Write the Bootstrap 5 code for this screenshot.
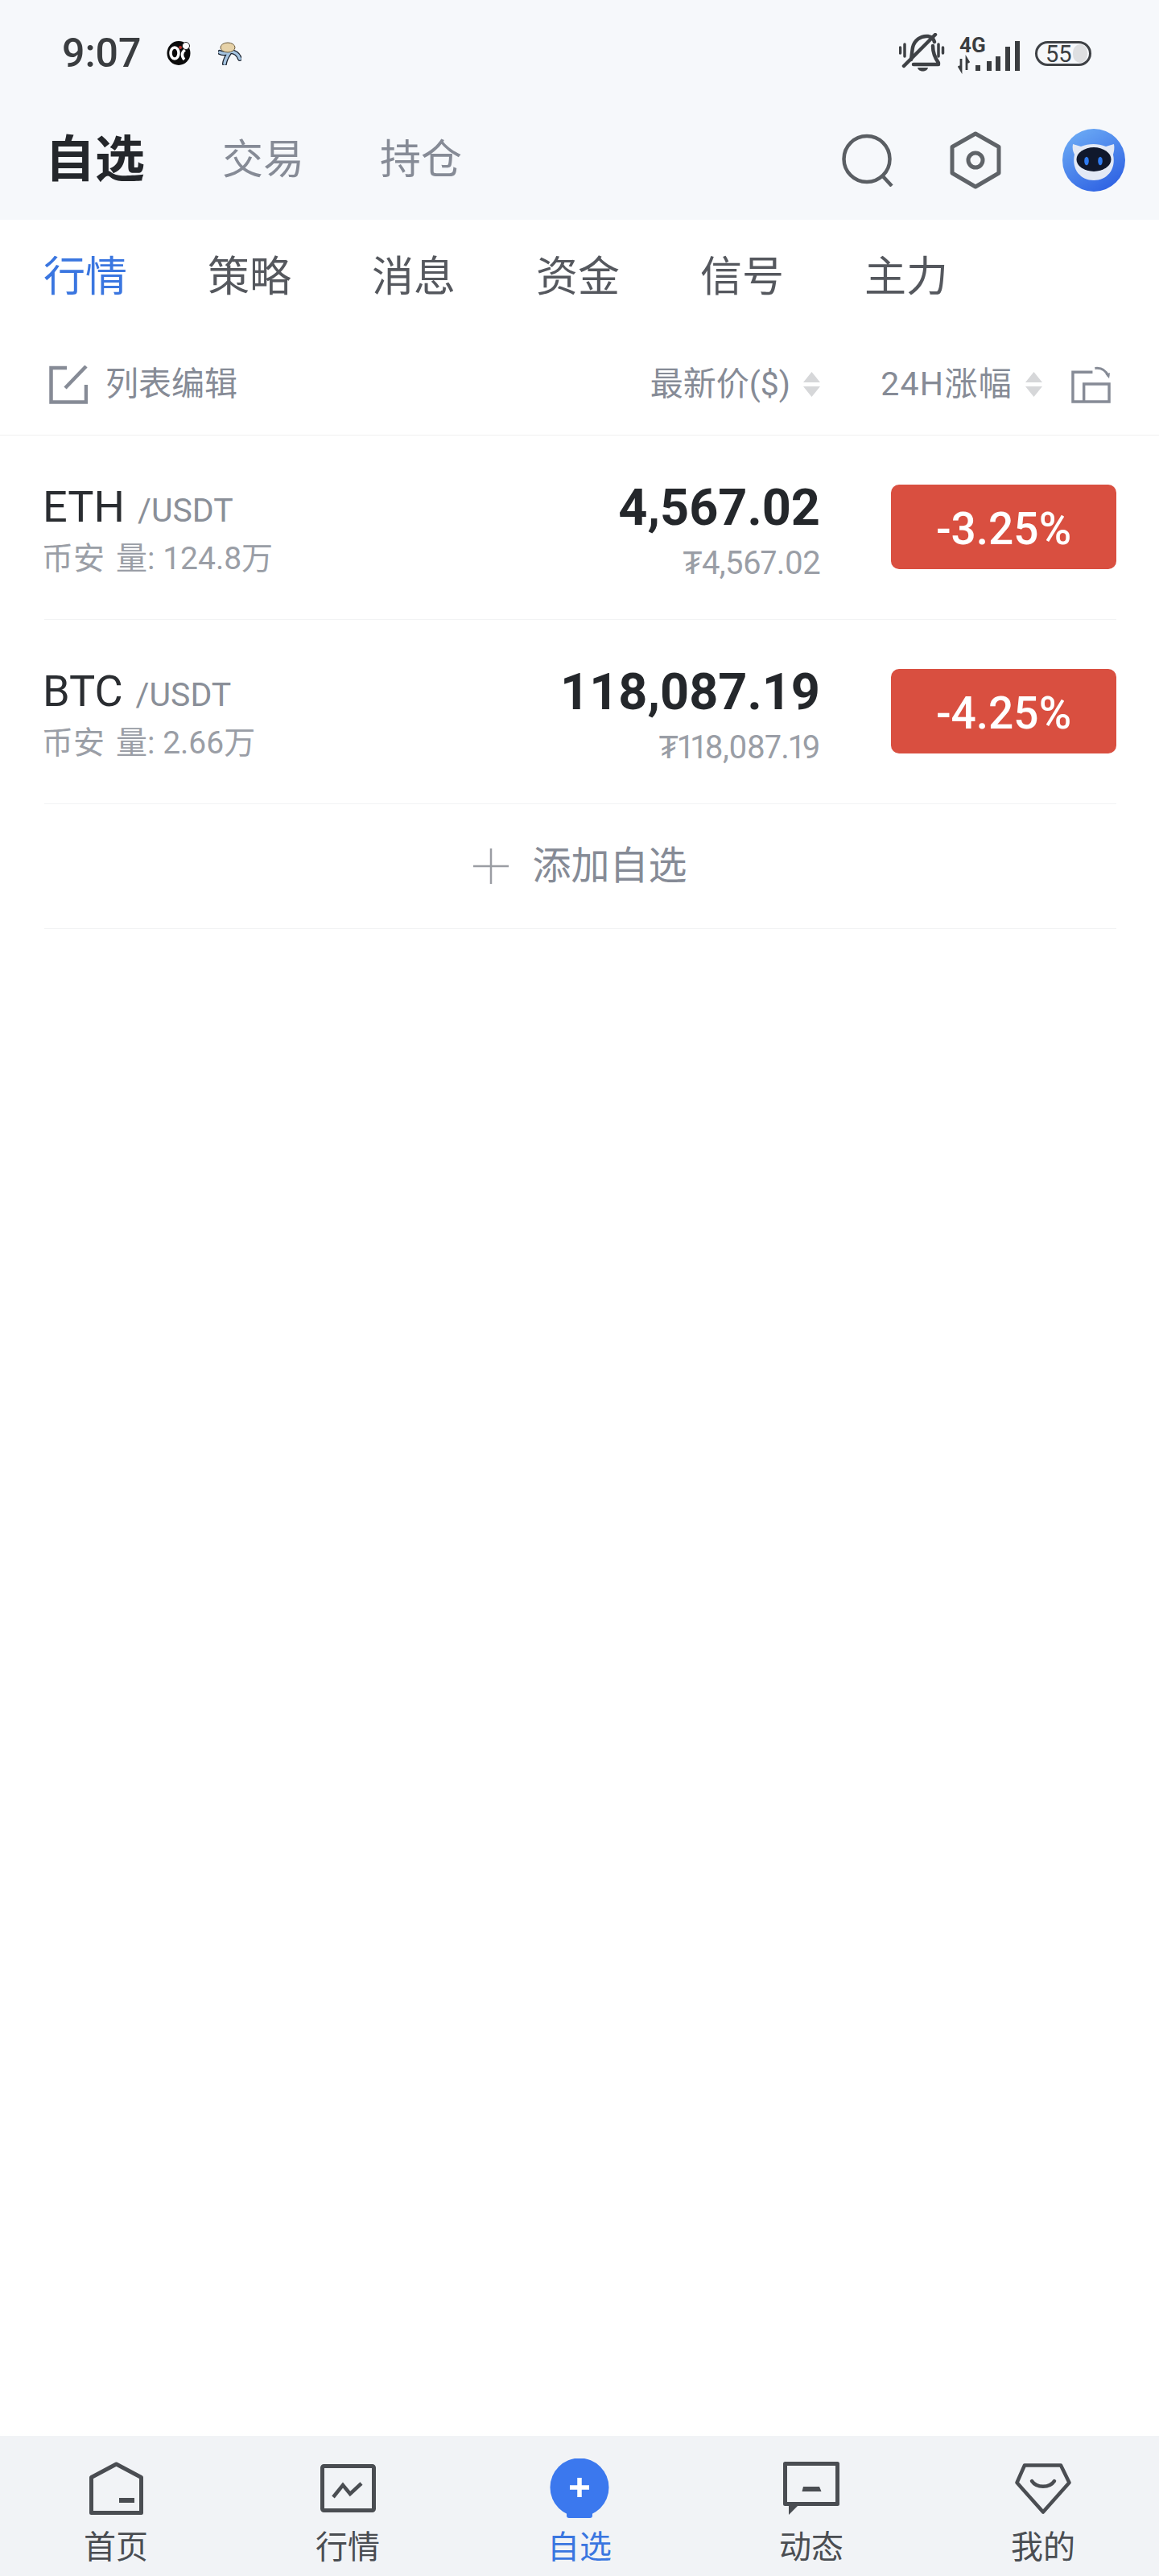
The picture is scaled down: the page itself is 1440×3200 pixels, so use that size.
<!DOCTYPE html>
<html lang="zh-CN">
<head>
    <meta charset="UTF-8">
    <meta name="viewport" content="width=device-width, initial-scale=1.0">
    <title>自选</title>
    <link href="https://cdn.jsdelivr.net/npm/bootstrap@5.3.0/dist/css/bootstrap.min.css" rel="stylesheet">
    <style>
        body { font-family: Roboto, "Noto Sans CJK SC", sans-serif; background: #fff; color: #2a2d31; }
        svg { display: block; flex: none; }
        .top-head { background: #f6f8fb; height: 273px; }
        .status-row { height: 132px; padding: 0 84px 0 77px; }
        .status-time { font-size: 50px; font-weight: 500; line-height: 1; color: #3a3d40; width: 130px; }
        .status-gap { margin-left: 34px; }
        .head-row { height: 141px; padding: 0 42px 8px 56px; }
        .head-main { font-size: 62px; font-weight: 700; color: #24272b; line-height: 1; width: 220px; }
        .head-tab { font-size: 51px; color: #868b96; line-height: 1; width: 196px; }
        .head-hex { margin: 0 76px 0 70px; }
        .sub-tabs { height: 140px; padding: 4px 0 0 54px; gap: 100px; font-size: 52px; color: #55585e; line-height: 1; }
        .sub-active { color: #3a76e0; }
        .list-head { height: 128px; border-bottom: 1px solid #f0f0f0; padding: 2px 60px 0 61px; font-size: 41px; color: #868b96; line-height: 1; }
        .list-edit { margin-left: 22px; }
        .sort-arrows { width: 21px; margin-left: 16px; }
        .col-change { margin-left: 75px; letter-spacing: 1.300px; }
        .col-rotate { margin-left: 36px; }
        .coin-row { height: 229px; margin: 0 53px 0 55px; padding-top: 61px; border-bottom: 1px solid #f2f3f4; }
        .coin-name { font-size: 54px; line-height: 56px; color: #2a2d31; margin-left: -2px; }
        .coin-pair { font-size: 41px; color: #8a8f98; margin-left: 16px; }
        .coin-vol { font-size: 39px; line-height: 50px; color: #9a9ea6; margin: 7px 0 0 -3px; }
        .vol-gap { margin-left: 14px; }
        .price-col { width: 500px; text-align: right; margin-right: 88px; }
        .price-main { font-size: 63px; font-weight: 700; line-height: 58px; color: #24272b; }
        .price-sub { font-size: 40px; line-height: 50px; color: #9a9ea6; margin-top: 15px; font-variant-numeric: proportional-nums; letter-spacing: -0.700px; }
        .change-box { width: 280px; height: 105px; padding-top: 5px; background: #d94f40; border-radius: 10px; color: #fff; font-size: 55px; font-weight: 500; }
        .add-row { height: 155px; margin: 0 53px 0 55px; border-bottom: 1px solid #f2f3f4; font-size: 48px; color: #868b96; gap: 29px; }
        .bottom-bar { background: #f1f3f6; height: 174px; padding-top: 23px; }
        .bar-item { width: 288px; color: #4a4d52; font-size: 40px; line-height: 1; }
        .bar-icon { height: 84px; }
        .bar-label { line-height: 52px; margin-top: 6px; }
        .bar-on { color: #3a76e0; }
    </style>
</head>
<body>
<div class="d-flex flex-column min-vh-100">
    <div class="top-head">
        <div class="status-row d-flex align-items-center">
            <span class="status-time">9:07</span>
            <svg width="30" height="30" viewBox="0 0 30 30">
                <ellipse cx="15" cy="15" rx="14.500" ry="15" fill="#0b0b0b"/>
                <ellipse cx="10" cy="15" rx="5" ry="7" fill="none" stroke="#fff" stroke-width="3.500"/>
                <path d="M23 11c-4 2-5 8-1 12" fill="none" stroke="#fff" stroke-width="3.500"/>
                <circle cx="24" cy="6" r="4.500" fill="#fff" stroke="#222"/>
                <circle cx="17" cy="8" r="2" fill="#b8322a"/>
            </svg>
            <svg class="status-gap" width="29" height="29" viewBox="0 0 29 29">
                <path d="M15 12C12 17 9 20 8 27M15 12c5 0 10 3 12 9M15 12C10 15 6 15 2 13" fill="none" stroke="#1c2430" stroke-width="6" stroke-linecap="round"/>
                <path d="M15 12C12 17 9 20 8 27M15 12c5 0 10 3 12 9M15 12C10 15 6 15 2 13" fill="none" stroke="#a5c4e0" stroke-width="3.500" stroke-linecap="round"/>
                <ellipse cx="12" cy="7" rx="9" ry="6" fill="#e6d2a8" stroke="#6a5a3c"/>
            </svg>
            <div class="ms-auto d-flex align-items-center">
                <svg width="57" height="50" viewBox="0 0 57 50" fill="none" stroke="#3f4246" stroke-linecap="round">
                    <path d="M1.500 18v7M7 14v15M49 14v15M54.500 18v7" stroke-width="3.500"/>
                    <path d="M15 33c1-6 1-9 2-15 2-9 10-15 19-14 6 1 7 4 8 7M42 16c0 8 2 14 7 21M18 39h31" stroke-width="4.500"/>
                    <path d="M6 41L45 2" stroke-width="4.500"/>
                    <path d="M23 43h13c-1 6-12 6-13 0z" fill="#3f4246" stroke="none"/>
                </svg>
                <svg width="80" height="52" viewBox="0 -4 80 52" class="ms-3">
                    <text x="2" y="21" font-family="Roboto" font-weight="700" font-size="26" fill="#3a3d40">4G</text>
                    <path d="M4 29v14l-3-5M11 43V29l3 5" fill="none" stroke="#3a3d40" stroke-width="2.800"/>
                    <path d="M22 37h6v7h-6zM36 32h6v12h-6zM47 26h6v18h-6zM59 14h6v30h-6zM71 7h6v37h-6z" fill="#3a3d40"/>
                </svg>
                <svg width="70" height="37" viewBox="0 0 70 37" class="ms-3">
                    <rect x="47" y="7" width="18" height="23" rx="10" fill="#dedfe1"/>
                    <rect x="1.500" y="4.500" width="67" height="28" rx="14" fill="none" stroke="#3f4246" stroke-width="3"/>
                    <text x="13" y="29" font-family="Roboto" font-size="29" fill="#3a3d40">55</text>
                </svg>
            </div>
        </div>
        <div class="head-row d-flex align-items-center">
            <span class="head-main">自选</span>
            <span class="head-tab">交易</span>
            <span class="head-tab">持仓</span>
            <div class="ms-auto d-flex align-items-center">
                <svg width="64" height="66" viewBox="0 0 64 66" fill="none" stroke="#5a5e63" stroke-width="4.500">
                    <circle cx="31" cy="31.500" r="28.500"/>
                    <path d="M50 52l12 13"/>
                </svg>
                <svg width="64" height="72" viewBox="0 0 64 72" fill="none" stroke="#5f6368" stroke-width="5" class="head-hex">
                    <path d="M32 3l29 16.500V52L32 69 3 52V19.500z" stroke-linejoin="round"/>
                    <circle cx="32" cy="36" r="9"/>
                </svg>
                <svg width="78" height="78" viewBox="0 0 78 78">
                    <defs>
                        <linearGradient id="avatarBg" x1="0.2" y1="0" x2="0.8" y2="1">
                            <stop offset="0" stop-color="#6cabf5"/>
                            <stop offset="1" stop-color="#2c5fe2"/>
                        </linearGradient>
                    </defs>
                    <circle cx="39" cy="39" r="39" fill="url(#avatarBg)"/>
                    <path d="M13 19l10 3c10-4 21-4 31 0l10-3c1 5 0 9-1 13 4 19-8 32-24 32S11 51 15 32c-2-4-3-8-2-13z" fill="#e3e9f5"/>
                    <ellipse cx="39" cy="38" rx="21.500" ry="15" fill="#10182c"/>
                    <ellipse cx="30" cy="40" rx="2.800" ry="5.200" fill="#2f7bf0"/>
                    <ellipse cx="47" cy="40" rx="2.800" ry="5.200" fill="#2f7bf0"/>
                </svg>
            </div>
        </div>
    </div>

    <div class="sub-tabs d-flex align-items-center">
        <span class="sub-active">行情</span>
        <span>策略</span>
        <span>消息</span>
        <span>资金</span>
        <span>信号</span>
        <span>主力</span>
    </div>

    <div class="list-head d-flex align-items-center">
        <svg width="48" height="48" viewBox="0 0 48 48" fill="none" stroke="#868b96" stroke-width="4.500">
            <path d="M22 3H2.500v42.500H46V24"/>
            <path d="M46 1L20 28"/>
        </svg>
        <span class="list-edit">列表编辑</span>
        <span class="ms-auto">最新价($)</span>
        <svg class="sort-arrows" width="21" height="31" viewBox="0 0 21 31" fill="#d6d7d9">
            <path d="M10.500 0L21 13H0z"/><path d="M0 18h21L10.500 31z"/>
        </svg>
        <span class="col-change">24H涨幅</span>
        <svg class="sort-arrows" width="21" height="31" viewBox="0 0 21 31" fill="#d6d7d9">
            <path d="M10.500 0L21 13H0z"/><path d="M0 18h21L10.500 31z"/>
        </svg>
        <svg width="49" height="46" viewBox="0 0 50 46" fill="none" stroke="#868b96" stroke-width="3.500" class="col-rotate">
            <path d="M27 7H2v37.500h46V22H16v22"/>
            <path d="M30 2c8-1 14 3 17 10" stroke-width="3"/>
            <path d="M43 9l5 6 1-7z" fill="#868b96" stroke="none"/>
        </svg>
    </div>

    <div class="coin-row d-flex align-items-start">
        <div class="flex-grow-1">
            <div class="coin-name">ETH<span class="coin-pair">/USDT</span></div>
            <div class="coin-vol">币安<span class="vol-gap">量: 124.8万</span></div>
        </div>
        <div class="price-col">
            <div class="price-main">4,567.02</div>
            <div class="price-sub">₮4,567.02</div>
        </div>
        <div class="change-box d-flex align-items-center justify-content-center">-3.25%</div>
    </div>

    <div class="coin-row d-flex align-items-start">
        <div class="flex-grow-1">
            <div class="coin-name">BTC<span class="coin-pair">/USDT</span></div>
            <div class="coin-vol">币安<span class="vol-gap">量: 2.66万</span></div>
        </div>
        <div class="price-col">
            <div class="price-main">118,087.19</div>
            <div class="price-sub">₮118,087.19</div>
        </div>
        <div class="change-box d-flex align-items-center justify-content-center">-4.25%</div>
    </div>

    <div class="add-row d-flex align-items-center justify-content-center">
        <svg width="44" height="44" viewBox="0 0 44 44" stroke="#9a9da3" stroke-width="2.500">
            <path d="M22 0v44M0 22h44"/>
        </svg>
        <span>添加自选</span>
    </div>

    <div class="bottom-bar mt-auto d-flex">
        <div class="bar-item d-flex flex-column align-items-center">
            <div class="bar-icon d-flex align-items-center">
                <svg width="67" height="66" viewBox="0 0 67 66" fill="none" stroke="#4a4d52" stroke-width="5">
                    <path d="M2.500 63.500V19.500L33.500 3l31 16.500v44z" stroke-linejoin="round"/>
                    <path d="M37 48h19" stroke-width="6"/>
                </svg>
            </div>
            <span class="bar-label">首页</span>
        </div>
        <div class="bar-item d-flex flex-column align-items-center">
            <div class="bar-icon d-flex align-items-center">
                <svg width="69" height="60" viewBox="0 0 69 60" fill="none" stroke="#4a4d52" stroke-width="5">
                    <rect x="2.500" y="2.500" width="64" height="55" rx="2"/>
                    <path d="M16 41l12-15 9 11 14-13" stroke-width="4.500"/>
                </svg>
            </div>
            <span class="bar-label">行情</span>
        </div>
        <div class="bar-item d-flex flex-column align-items-center">
            <div class="bar-icon d-flex align-items-center">
                <svg width="74" height="74" viewBox="0 0 74 74">
                    <circle cx="37" cy="36" r="36.500" fill="#3b78ee"/>
                    <rect x="21" y="60" width="32" height="14" rx="3" fill="#3b78ee"/>
                    <path d="M37 24v24M25 36h24" stroke="#fff" stroke-width="5.500"/>
                </svg>
            </div>
            <span class="bar-label bar-on">自选</span>
        </div>
        <div class="bar-item d-flex flex-column align-items-center">
            <div class="bar-icon d-flex align-items-center">
                <svg width="70" height="66" viewBox="0 0 70 66" fill="none" stroke="#4a4d52" stroke-width="5">
                    <path d="M2.500 2.500h65v50h-65z" stroke-linejoin="round"/>
                    <path d="M7 53h13L7 66z" fill="#4a4d52" stroke="none"/>
                    <path d="M25 31h20l2.500 6h-24z" fill="#4a4d52" stroke="none"/>
                </svg>
            </div>
            <span class="bar-label">动态</span>
        </div>
        <div class="bar-item d-flex flex-column align-items-center">
            <div class="bar-icon d-flex align-items-center">
                <svg width="70" height="63" viewBox="0 0 70 63" fill="none" stroke="#4a4d52" stroke-width="4.500" stroke-linejoin="round">
                    <path d="M12 2.500h45L67.500 24 35 60.500 2.500 24z"/>
                    <path d="M21 22c6 9 22 9 28 0" stroke-linecap="round"/>
                </svg>
            </div>
            <span class="bar-label">我的</span>
        </div>
    </div>
</div>
<script src="https://cdn.jsdelivr.net/npm/bootstrap@5.3.0/dist/js/bootstrap.bundle.min.js"></script>
</body>
</html>
